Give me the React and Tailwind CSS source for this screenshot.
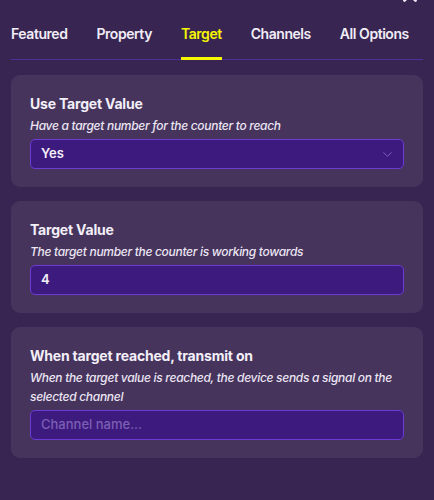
import { X, ChevronDown } from "lucide-react";

const tabs = ["Featured", "Property", "Target", "Channels", "All Options"];

function Card({ title, description, children }) {
    return (
        <div className="rounded-[9px] bg-[#46345d] px-[19px] pt-[19px] pb-[18px]">
            <div className="text-[14px] leading-[20px] font-bold tracking-[-0.2px] text-[#f3eff8]">{title}</div>
            <div className="text-[12px] leading-[19px] italic font-medium tracking-[-0.3px] text-[#ece6f3] mt-[2px]">{description}</div>
            <div className="mt-[4px]">{children}</div>
        </div>
    );
}

export default function App() {
    return (
        <div
            className="relative w-[434px] h-[500px] overflow-hidden bg-[#382552]"
            style={{ fontFamily: "Inter, 'Noto Sans', sans-serif" }}
        >
            <X size={22} strokeWidth={3} className="absolute right-[13px] top-[-16px] text-[#eeeaf3]" />

            <div className="px-[11px] pt-[24px]">
                {/* tabs */}
                <div className="flex gap-[29px] border-b border-[#4b2f9a]">
                    {tabs.map((t) => (
                        <div
                            key={t}
                            className={`relative pb-[15px] whitespace-nowrap text-[14px] leading-[20px] font-semibold tracking-[-0.45px] ${t === "Target" ? "text-[#f7f700]" : "text-[#f1edf6]"}`}
                        >
                            {t}
                            {t === "Target" && (
                                <div className="absolute left-0 right-0 bottom-[-1px] h-[3px] bg-[#f7f700]" />
                            )}
                        </div>
                    ))}
                </div>

                <div className="flex flex-col gap-[14px] mt-[15px]">
                    <Card title="Use Target Value" description="Have a target number for the counter to reach">
                        <div className="flex items-center justify-between h-[30px] rounded-[5px] border border-[#6b3bd3] bg-[#3d1a7e] pl-[10px] pr-[8px]">
                            <span className="text-[13px] font-semibold text-[#f4f0fa]">Yes</span>
                            <ChevronDown size={15} strokeWidth={1.3} className="text-[#8d70c8]" />
                        </div>
                    </Card>

                    <Card title="Target Value" description="The target number the counter is working towards">
                        <div className="flex items-center h-[30px] rounded-[5px] border border-[#6b3bd3] bg-[#3d1a7e] pl-[10px]">
                            <span className="text-[13px] font-semibold text-[#f4f0fa]">4</span>
                        </div>
                    </Card>

                    <Card
                        title="When target reached, transmit on"
                        description="When the target value is reached, the device sends a signal on the selected channel"
                    >
                        <div className="flex items-center h-[30px] rounded-[5px] border border-[#6b3bd3] bg-[#3d1a7e] pl-[10px]">
                            <span className="text-[13px] font-medium text-[#7c5fb4]">Channel name...</span>
                        </div>
                    </Card>
                </div>
            </div>
        </div>
    );
}
